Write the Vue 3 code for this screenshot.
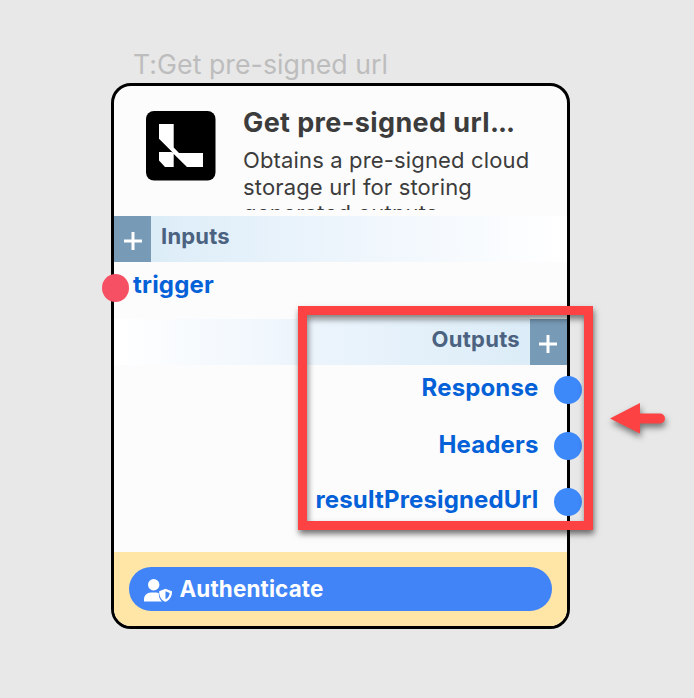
<script setup>
const outputs = ['Response', 'Headers', 'resultPresignedUrl']
</script>

<template>
  <main class="canvas">
    <div class="node-title">T:Get pre-signed url</div>
    <section class="card">
      <header class="head">
        <svg class="logo" viewBox="0 0 70 70">
          <rect width="69.500" height="69.500" rx="8" />
          <path fill="#fff" d="M13 13H27.700V36.500L33 42H57V56H41L27.700 43V56H19L13 49.500V41H25.500L27 42.300L25.500 40.300L13 27.800Z" />
        </svg>
        <div class="about">
          <h1>Get pre-signed url<span class="dots">...</span></h1>
          <p>Obtains a pre-signed cloud storage url for storing <span class="last">generated outputs</span></p>
        </div>
      </header>
      <div class="bar inputs">
        <button class="add"><svg viewBox="0 0 18 18"><path d="M9 0V18M0 9H18" /></svg></button>
        <span>Inputs</span>
      </div>
      <div class="input-row"><i class="dot red"></i><span>trigger</span></div>
      <div class="bar outputs">
        <span>Outputs</span>
        <button class="add"><svg viewBox="0 0 18 18"><path d="M9 0V18M0 9H18" /></svg></button>
      </div>
      <ul class="ports">
        <li v-for="name in outputs" :key="name"><span>{{ name }}</span><i class="dot"></i></li>
      </ul>
      <footer>
        <button class="auth">
          <svg class="user" viewBox="0 0 28 23">
            <circle cx="9.700" cy="5.700" r="5.700" />
            <path d="M0 22.500V20.500C0 16.500 3 13.500 7 13.500H12C13 13.500 14 13.700 14.700 14C14.700 17.500 15.500 20.500 18 22.500Z" />
            <path fill-rule="evenodd" d="M21.500 9.700L28 12.300C28.200 17 26 21 21.500 22.800C17 21 15 17 15.200 12.300ZM21.500 12.200V20.200C24 19 25.500 17 25.600 13.900Z" />
          </svg>
          <span>Authenticate</span>
        </button>
      </footer>
    </section>
    <div class="highlight"></div>
    <svg class="arrow" viewBox="0 0 56 32">
      <path d="M0 15.500L30 0V10.500H50A5 5 0 0 1 50 20.500H30V30.500Z" />
    </svg>
  </main>
</template>

<style>
body { background: #e8e8e8; }
</style>

<style scoped>
.canvas {
  position: relative;
  box-sizing: border-box;
  width: 694px;
  height: 698px;
  padding: 47px 0 0 111px;
  overflow: hidden;
  background: #e8e8e8;
  font-family: Inter, sans-serif;
}
.node-title {
  height: 36px;
  padding-left: 22px;
  font-size: 26.7px;
  line-height: 35px;
  letter-spacing: 0.04px;
  color: #bdbdbd;
  white-space: nowrap;
}
.card {
  display: flex;
  flex-direction: column;
  box-sizing: border-box;
  width: 459px;
  height: 546px;
  border: 3px solid #000;
  border-radius: 20px;
  background: #fcfcfc;
}
.head {
  display: flex;
  box-sizing: border-box;
  height: 130px;
  padding: 25px 0 6px 32px;
  gap: 27px;
}
.logo { flex: none; width: 70px; height: 70px; }
.about { width: 300px; margin-top: -5px; overflow: hidden; color: #3c3c3c; }
h1 { margin: 0; font-size: 27px; line-height: 33px; font-weight: 700; letter-spacing: 0.38px; white-space: nowrap; }
.dots { letter-spacing: -1px; }
p { margin: 8px 0 0; font-size: 22px; line-height: 27px; letter-spacing: 0.15px; }
.last { position: relative; top: -1.5px; letter-spacing: 0.25px; }
.bar {
  display: flex;
  flex: none;
  height: 46px;
  font-size: 22px;
  font-weight: 700;
  line-height: 41px;
  letter-spacing: 0.2px;
  color: #4b6280;
}
.inputs { gap: 10px; background: linear-gradient(90deg, #d9ebf7, #edf5fc 50%, #fff); }
.outputs { justify-content: flex-end; gap: 10px; letter-spacing: 0.3px; background: linear-gradient(270deg, #d9ebf7, #edf5fc 60%, #fff); }
button { border: 0; font: inherit; }
.add {
  display: flex;
  align-items: center;
  justify-content: center;
  width: 37px;
  padding: 4px 0 0;
  background: #779bb7;
}
.add svg { width: 18px; height: 18px; fill: none; stroke: #fff; stroke-width: 3; }
.outputs .add { padding-right: 2px; }
.input-row { display: flex; flex: none; height: 57px; margin-left: -12px; gap: 4px; color: #0461d8; font-size: 24px; font-weight: 700; line-height: 46px; letter-spacing: 0.2px; }
.dot { flex: none; width: 28px; height: 28px; border-radius: 50%; background: #3e89fa; }
.red { width: 27px; margin-top: 12px; background: #f65064; }
.ports { display: flex; flex: none; flex-direction: column; height: 187px; margin: 0 -15px 0 0; padding: 0; list-style: none; }
.ports li { display: flex; justify-content: flex-end; height: 56px; gap: 15.500px; color: #0461d8; font-size: 24px; font-weight: 700; line-height: 46px; letter-spacing: 0.15px; }
.ports li:nth-child(2) { line-height: 48px; }
.ports .dot { margin-top: 11px; }
footer { flex: 1; box-sizing: border-box; padding: 14.500px 14.500px 0; border-radius: 0 0 17px 17px; background: #ffe6a6; }
.auth { display: flex; width: 423.500px; height: 44.500px; padding: 0 0 0 15px; gap: 8px; border-radius: 23px; background: #4084f7; color: #fff; font-size: 22.400px; font-weight: 700; line-height: 44px; letter-spacing: 0.15px; }
.user { width: 28px; height: 23px; margin-top: 12px; fill: #fff; }
.highlight {
  position: absolute;
  left: 298px;
  top: 306px;
  box-sizing: border-box;
  width: 295px;
  height: 224px;
  border: 9px solid #fc4242;
  box-shadow: 1px 4px 6px rgba(0, 0, 0, .55), inset 1px 4px 6px rgba(0, 0, 0, .5);
}
.arrow { position: absolute; left: 610px; top: 403px; width: 56px; height: 32px; overflow: visible; fill: #fc4242; filter: drop-shadow(1px 4px 3px rgba(0, 0, 0, .5)); }
</style>
